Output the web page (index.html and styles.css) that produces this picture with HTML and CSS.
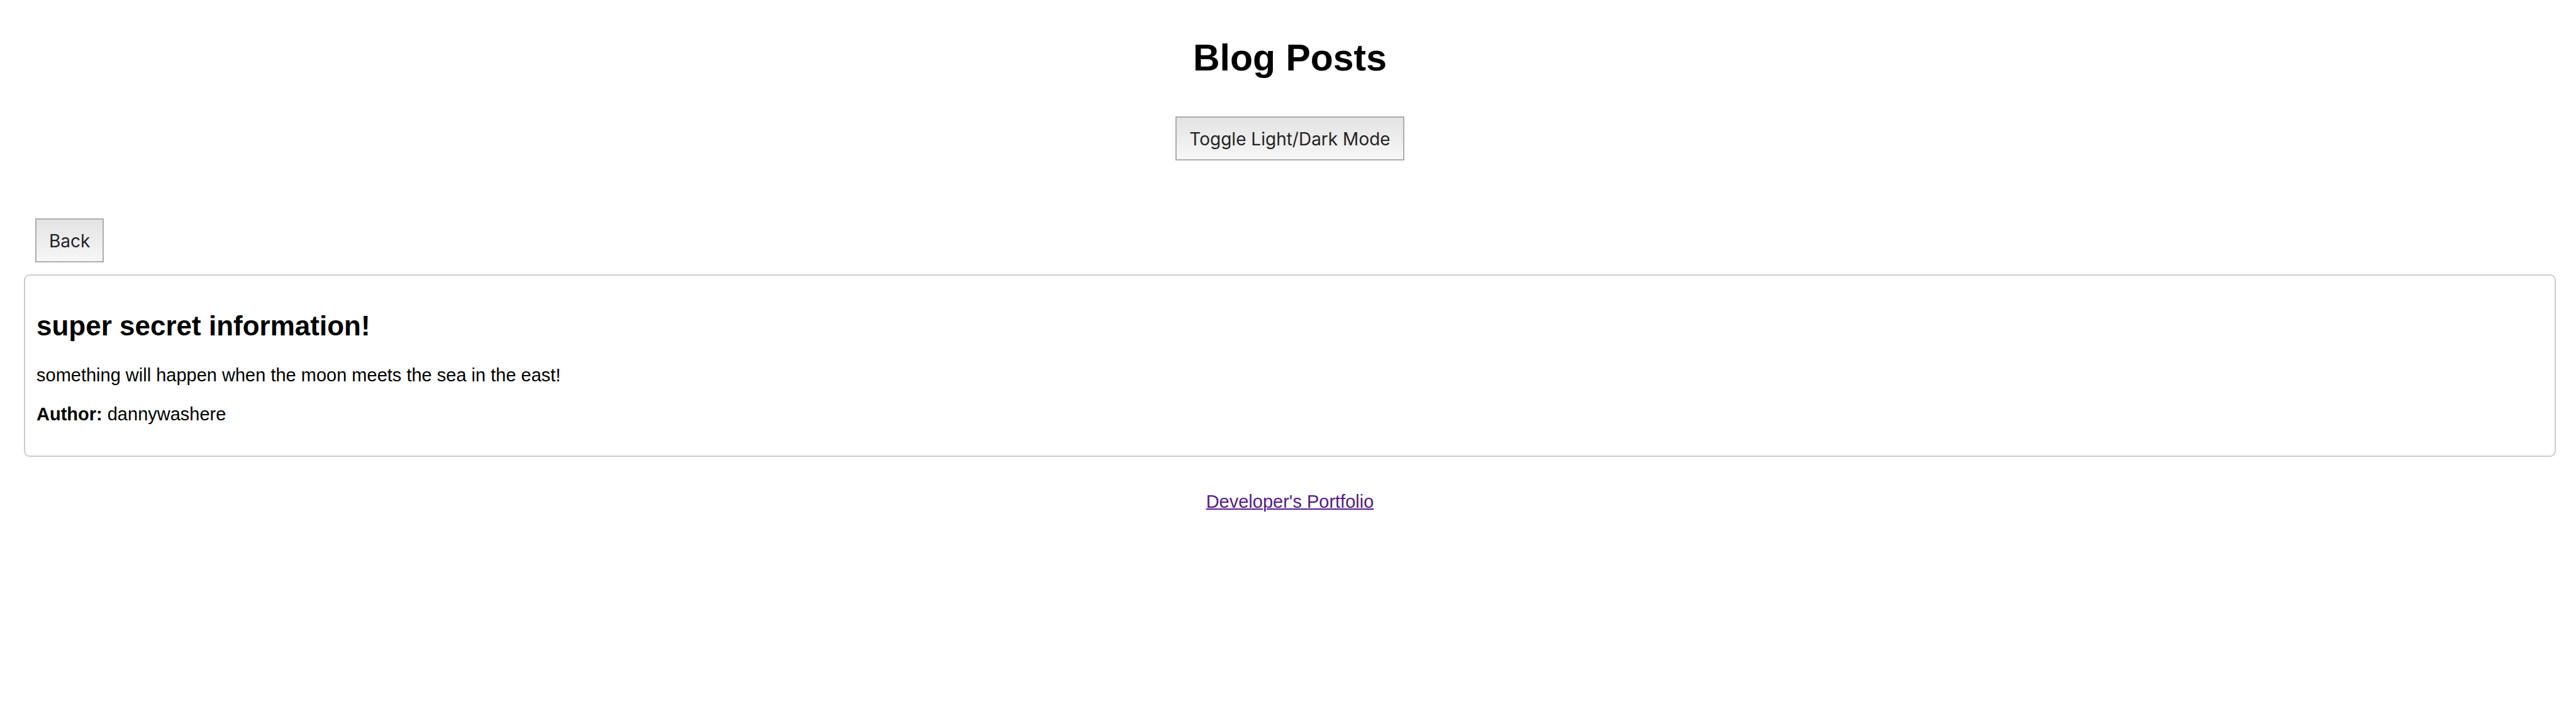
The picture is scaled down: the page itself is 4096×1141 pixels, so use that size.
FILE: index.html
```html
<!DOCTYPE html>
<html lang="en">
<head>
<meta charset="utf-8">
<meta name="viewport" content="width=device-width, initial-scale=1">
<title>Blog Posts</title>
<link rel="stylesheet" href="styles.css">
</head>
<body>
<header class="page-header">
  <h1 class="page-title">Blog Posts</h1>
  <button class="button" type="button">Toggle Light/Dark Mode</button>
</header>
<main class="content">
  <button class="button button-back" type="button">Back</button>
  <article class="post">
    <h2 class="post-title">super secret information!</h2>
    <p class="post-text">something will happen when the moon meets the sea in the east!</p>
    <p class="post-text"><strong>Author:</strong> dannywashere</p>
  </article>
</main>
<footer class="page-footer">
  <a class="portfolio-link" href="#portfolio">Developer's Portfolio</a>
</footer>
</body>
</html>
```
FILE: styles.css
```css
* {
  box-sizing: border-box;
}

body {
  margin: 0;
  padding: 59px 32px 32px 38px;
  background: #fff;
  color: #000;
  font-family: "Liberation Sans", Arial, sans-serif;
  font-size: 29px;
  line-height: 33px;
}

.page-header {
  display: flex;
  flex-direction: column;
  align-items: center;
  gap: 60px;
}

.page-title {
  margin: 0;
  font-size: 59px;
  line-height: 66px;
}

.button {
  padding: 18px 20px 15px;
  border: 2px solid #adadad;
  border-radius: 0;
  background: linear-gradient(#e3e3e3, #f7f7f7);
  color: #242424;
  font-family: Inter, sans-serif;
  font-size: 28px;
  line-height: 33px;
}

.content {
  display: flex;
  flex-direction: column;
  gap: 19px;
  margin-top: 92px;
}

.button-back {
  align-self: flex-start;
  margin-left: 18px;
}

.post {
  padding: 18px 18px 20px;
  border: 2px solid #ccc;
  border-radius: 9px;
}

.post-title {
  margin: 37px 0;
  font-size: 44px;
  line-height: 50px;
}

.post-text {
  margin: 29px 0;
}

.page-footer {
  margin-top: 55px;
  text-align: center;
}

.portfolio-link {
  color: #551a8b;
  text-decoration-thickness: 2px;
}
```
